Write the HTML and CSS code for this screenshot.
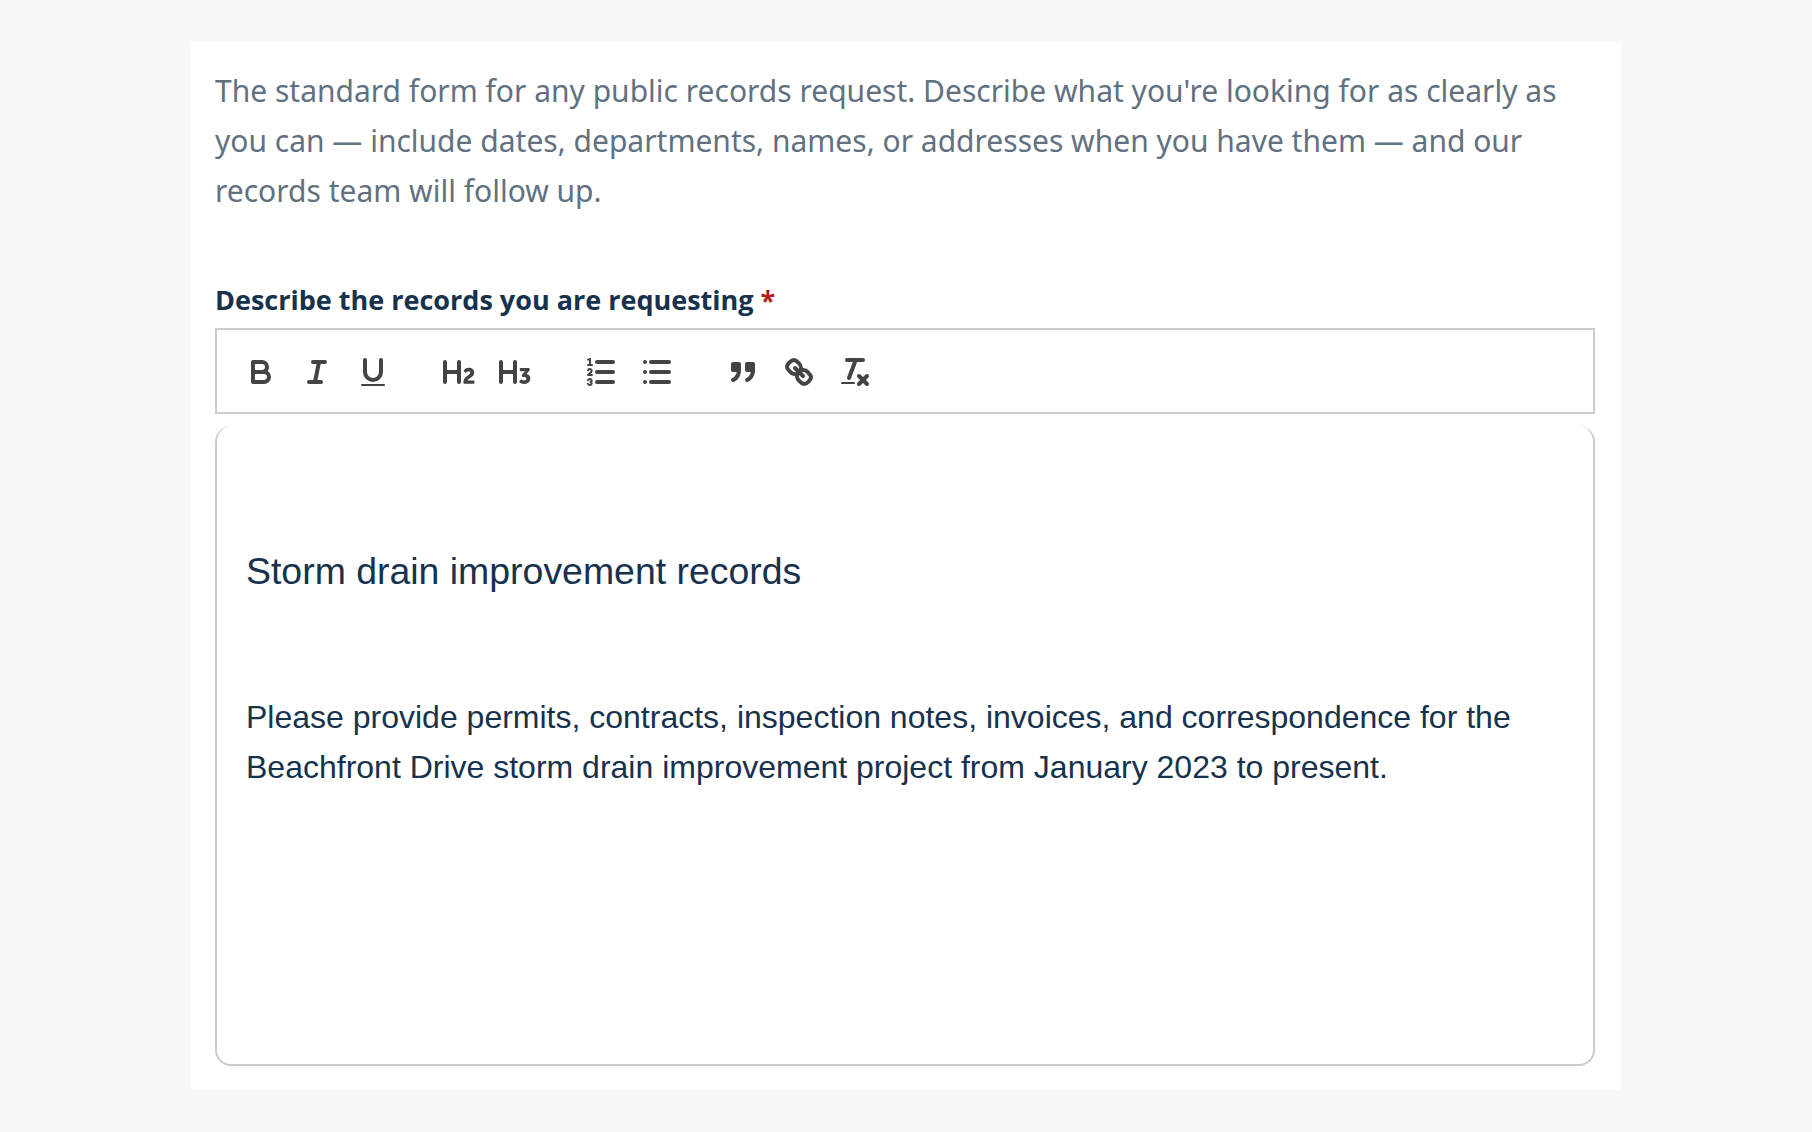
FILE: index.html
```html
<!DOCTYPE html>
<html lang="en">
<head>
    <meta charset="UTF-8">
    <meta name="viewport" content="width=device-width, initial-scale=1.0">
    <title>Public records request</title>
    <link rel="stylesheet" href="styles.css">
</head>
<body>
    <main class="card">
        <p class="intro">The standard form for any public records request. Describe what you're looking for as clearly as you can — include dates, departments, names, or addresses when you have them — and our records team will follow up.</p>

        <form>
            <div class="field-label" id="request-label">Describe the records you are requesting <span class="required">*</span></div>

            <div class="toolbar" role="toolbar" aria-label="Formatting">
                <div class="tool-group">
                    <button type="button" class="tool" aria-label="Bold">
                        <svg viewBox="0 0 18 18">
                            <path class="stroke" d="M5,4H9.5A2.5,2.5,0,0,1,12,6.5v0A2.5,2.5,0,0,1,9.5,9H5A0,0,0,0,1,5,9V4A0,0,0,0,1,5,4Z"/>
                            <path class="stroke" d="M5,9h5.5A2.5,2.5,0,0,1,13,11.5v0A2.5,2.5,0,0,1,10.5,14H5a0,0,0,0,1,0,0V9A0,0,0,0,1,5,9Z"/>
                        </svg>
                    </button>
                    <button type="button" class="tool" aria-label="Italic">
                        <svg viewBox="0 0 18 18">
                            <line class="stroke" x1="7" x2="13" y1="4" y2="4"/>
                            <line class="stroke" x1="5" x2="11" y1="14" y2="14"/>
                            <line class="stroke" x1="8" x2="10" y1="14" y2="4"/>
                        </svg>
                    </button>
                    <button type="button" class="tool" aria-label="Underline">
                        <svg viewBox="0 0 18 18">
                            <path class="stroke" d="M5,3V9a4.012,4.012,0,0,0,4,4H9a4.012,4.012,0,0,0,4-4V3"/>
                            <rect class="fill" height="1" rx="0.5" ry="0.5" width="12" x="3" y="15"/>
                        </svg>
                    </button>
                </div>
                <div class="tool-group">
                    <button type="button" class="tool" aria-label="Heading 2">
                        <svg viewBox="0 0 18 18">
                            <path class="fill" d="M16.73975,13.81445v.43945a.54085.54085,0,0,1-.605.60547H11.855a.58392.58392,0,0,1-.64893-.60547V14.0127c0-2.90527,3.39941-3.42187,3.39941-4.55469a.77675.77675,0,0,0-.84717-.78125,1.17684,1.17684,0,0,0-.83594.38477c-.2749.26367-.561.374-.85791.13184l-.4292-.34082c-.30811-.24219-.38525-.51758-.1543-.81445a2.97155,2.97155,0,0,1,2.45361-1.17676,2.45393,2.45393,0,0,1,2.68408,2.40918c0,2.45312-3.1792,2.92676-3.27832,3.93848h2.79443A.54085.54085,0,0,1,16.73975,13.81445ZM9,3A.99974.99974,0,0,0,8,4V8H3V4A1,1,0,0,0,1,4V14a1,1,0,0,0,2,0V10H8v4a1,1,0,0,0,2,0V4A.99974.99974,0,0,0,9,3Z"/>
                        </svg>
                    </button>
                    <button type="button" class="tool" aria-label="Heading 3">
                        <svg viewBox="0 0 18 18">
                            <path class="fill" d="M16.65186,12.30664a2.6742,2.6742,0,0,1-2.915,2.68457,3.96592,3.96592,0,0,1-2.25537-.6709.56007.56007,0,0,1-.13232-.83594L11.64648,13c.209-.34082.48389-.36328.82471-.1543a2.32654,2.32654,0,0,0,1.12256.33008c.71484,0,1.12207-.35156,1.12207-.78125,0-.61523-.61621-.86816-1.46338-.86816H13.2085a.65159.65159,0,0,1-.68213-.41895l-.05518-.10937a.67114.67114,0,0,1,.14307-.78125l.71533-.86914a8.55289,8.55289,0,0,1,.68213-.7373V8.58887a3.93913,3.93913,0,0,1-.748.05469H11.9873a.54085.54085,0,0,1-.605-.60547V7.59863a.54085.54085,0,0,1,.605-.60547h3.75146a.53773.53773,0,0,1,.60547.59375v.17676a1.03723,1.03723,0,0,1-.27539.748L14.74854,10.0293A2.31132,2.31132,0,0,1,16.65186,12.30664ZM9,3A.99974.99974,0,0,0,8,4V8H3V4A1,1,0,0,0,1,4V14a1,1,0,0,0,2,0V10H8v4a1,1,0,0,0,2,0V4A.99974.99974,0,0,0,9,3Z"/>
                        </svg>
                    </button>
                </div>
                <div class="tool-group">
                    <button type="button" class="tool" aria-label="Numbered list">
                        <svg viewBox="0 0 18 18">
                            <line class="stroke" x1="7" x2="15" y1="4" y2="4"/>
                            <line class="stroke" x1="7" x2="15" y1="9" y2="9"/>
                            <line class="stroke" x1="7" x2="15" y1="14" y2="14"/>
                            <line class="stroke thin" x1="2.5" x2="4.5" y1="5.5" y2="5.5"/>
                            <path class="fill" d="M3.5,6A0.5,0.5,0,0,1,3,5.5V3.085l-0.276.138A0.5,0.5,0,0,1,2.053,3c-0.124-.247-0.023-0.324.224-0.447l1-.5A0.5,0.5,0,0,1,4,2.5v3A0.5,0.5,0,0,1,3.5,6Z"/>
                            <path class="stroke thin" d="M4.5,10.5h-2c0-.234,1.85-1.076,1.85-2.234A0.959,0.959,0,0,0,2.5,8.156"/>
                            <path class="stroke thin" d="M2.5,14.846a0.959,0.959,0,0,0,1.85-.109A0.7,0.7,0,0,0,3.75,14a0.688,0.688,0,0,0,.6-0.736,0.959,0.959,0,0,0-1.85-.109"/>
                        </svg>
                    </button>
                    <button type="button" class="tool" aria-label="Bulleted list">
                        <svg viewBox="0 0 18 18">
                            <line class="stroke" x1="6" x2="15" y1="4" y2="4"/>
                            <line class="stroke" x1="6" x2="15" y1="9" y2="9"/>
                            <line class="stroke" x1="6" x2="15" y1="14" y2="14"/>
                            <line class="stroke" x1="3" x2="3" y1="4" y2="4"/>
                            <line class="stroke" x1="3" x2="3" y1="9" y2="9"/>
                            <line class="stroke" x1="3" x2="3" y1="14" y2="14"/>
                        </svg>
                    </button>
                </div>
                <div class="tool-group">
                    <button type="button" class="tool" aria-label="Quote">
                        <svg viewBox="0 0 18 18">
                            <rect class="fill stroke" height="3" width="3" x="4" y="5"/>
                            <rect class="fill stroke" height="3" width="3" x="11" y="5"/>
                            <path class="fill stroke even" d="M7,8c0,4.031-3,5-3,5"/>
                            <path class="fill stroke even" d="M14,8c0,4.031-3,5-3,5"/>
                        </svg>
                    </button>
                    <button type="button" class="tool" aria-label="Link">
                        <svg viewBox="0 0 18 18">
                            <line class="stroke" x1="7" x2="11" y1="7" y2="11"/>
                            <path class="stroke" d="M8.9,4.577a3.476,3.476,0,0,1,.36,4.679A3.476,3.476,0,0,1,4.577,8.9C3.185,7.5,2.035,6.4,4.217,4.217S7.5,3.185,8.9,4.577Z"/>
                            <path class="stroke" d="M13.423,9.1a3.476,3.476,0,0,0-4.679-.36,3.476,3.476,0,0,0,.36,4.679c1.392,1.392,2.5,2.542,4.679.36S14.815,10.5,13.423,9.1Z"/>
                        </svg>
                    </button>
                    <button type="button" class="tool" aria-label="Clear formatting">
                        <svg viewBox="0 0 18 18">
                            <line class="stroke" x1="5" x2="13" y1="3" y2="3"/>
                            <line class="stroke" x1="6" x2="9.35" y1="12" y2="3"/>
                            <line class="stroke" x1="11" x2="15" y1="11" y2="15"/>
                            <line class="stroke" x1="15" x2="11" y1="11" y2="15"/>
                            <rect class="fill" height="1" rx="0.5" ry="0.5" width="7" x="2" y="14"/>
                        </svg>
                    </button>
                </div>
            </div>

            <div class="editor" contenteditable="true" role="textbox" aria-multiline="true" aria-labelledby="request-label" spellcheck="false">
                <p><br></p>
                <h3>Storm drain improvement records</h3>
                <p><br></p>
                <p>Please provide permits, contracts, inspection notes, invoices, and correspondence for the Beachfront Drive storm drain improvement project from January 2023 to present.</p>
            </div>
        </form>
    </main>
</body>
</html>
```
FILE: styles.css
```css
* {
    box-sizing: border-box;
}

body {
    margin: 0;
    padding: 42px 24px;
    background-color: #f5f9fc;
    color: #17324d;
    font-family: "Segoe UI", "Noto Sans", "Open Sans", sans-serif;
}

.card {
    max-width: 1430px;
    margin: 0 auto;
    padding: 24px 26px 24px 24px;
    background-color: #fff;
    border-radius: 2px;
}

.intro {
    margin: 0 0 64px;
    color: #62717f;
    font-size: 30px;
    line-height: 50px;
}

.field-label {
    margin-bottom: 8px;
    font-family: "Segoe UI", "Open Sans", sans-serif;
    font-size: 27px;
    font-weight: 700;
    line-height: 40px;
}

.required {
    color: #b91c1c;
}

/* toolbar */
.toolbar {
    display: flex;
    flex-wrap: wrap;
    gap: 30px;
    padding: 18px 16px 16px;
    border: 2px solid #ccc;
}

.tool-group {
    display: flex;
}

.tool {
    width: 56px;
    height: 48px;
    padding: 6px 10px;
    border: none;
    background: none;
    cursor: pointer;
}

.tool svg {
    display: block;
    width: 36px;
    height: 36px;
}

.stroke {
    fill: none;
    stroke: #444;
    stroke-linecap: round;
    stroke-linejoin: round;
    stroke-width: 2;
}

.thin {
    stroke-width: 1;
}

.fill {
    fill: #444;
}

.even {
    fill-rule: evenodd;
}

/* editor */
.editor {
    min-height: 640px;
    margin-top: 12px;
    padding: 24px 29px;
    border: 2px solid #ccc;
    border-top: none;
    border-radius: 16px;
    outline: none;
    font-family: Arial, "Liberation Sans", sans-serif;
    font-size: 32px;
    line-height: 50px;
}

.editor p {
    margin: 0;
}

.editor h3 {
    margin: 46px 0;
    font-weight: 400;
}
```
